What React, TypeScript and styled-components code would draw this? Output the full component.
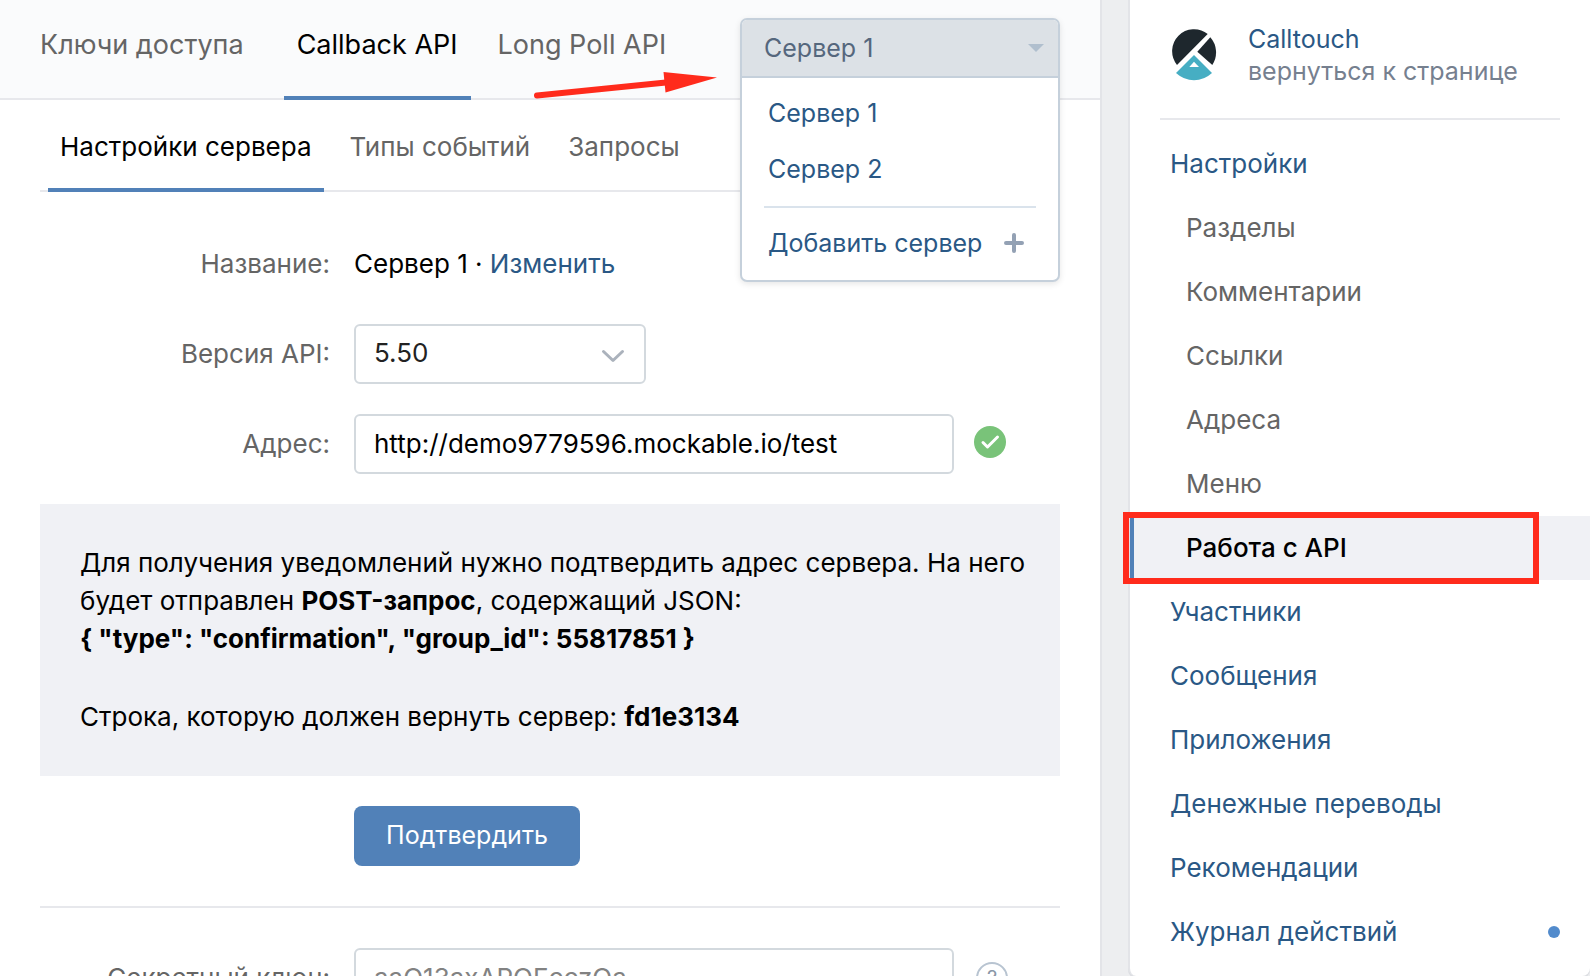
import React, { useState } from "react";
import styled, { createGlobalStyle, css } from "styled-components";

const color = {
  link: "#2a5885",
  muted: "#656565",
  accent: "#5181b8",
  line: "#e7e8ec",
  panelEdge: "#e3e4e8",
  page: "#edeef0",
  soft: "#f0f1f5",
  field: "#d3d9de",
  menuEdge: "#c5d0db",
  mark: "#ff2b1c",
};

const size = { small: "25px", base: "26px", large: "27px" };

const GlobalStyle = createGlobalStyle`
  *, *::before, *::after { box-sizing: border-box; }
  body {
    margin: 0;
    background: ${color.page};
    color: #000;
    font: ${size.base}/32px Inter, "Noto Sans", sans-serif;
  }
  button, input, select { font: inherit; color: inherit; }
  a { color: ${color.link}; text-decoration: none; }
`;

const Page = styled.div`
  display: grid;
  grid-template-columns: minmax(0, 1fr) 462px;
  column-gap: 26px;
  align-items: start;
  height: 100vh;
  overflow: hidden;
`;

const Main = styled.main`
  background: #fff;
  border-right: 2px solid ${color.panelEdge};
  min-height: 100vh;
`;

const Header = styled.header`
  position: relative;
  background: #fafbfc;
  box-shadow: inset 0 -2px ${color.line};
`;

const Tabs = styled.nav<{ $level: 1 | 2 }>`
  display: flex;
  gap: 14px;
  ${(p) =>
    p.$level === 1
      ? css`
          height: 100px;
          padding: 0 27px;
          font-size: ${size.large};
          & > :first-child {
            margin-right: 13px;
          }
        `
      : css`
          height: 92px;
          margin: 0 40px;
          padding: 0 8px;
          box-shadow: inset 0 -2px ${color.line};
        `}
`;

const Tab = styled.a<{ $active?: boolean; $level: 1 | 2 }>`
  display: flex;
  align-items: center;
  padding: ${(p) => (p.$level === 1 ? "0 13px 6px" : "6px 12px 0")};
  white-space: nowrap;
  color: ${(p) => (p.$active ? "#000" : color.muted)};
  border-bottom: 4px solid ${(p) => (p.$active ? color.accent : "transparent")};
`;

const Dropdown = styled.div`
  position: absolute;
  z-index: 2;
  top: 18px;
  right: 40px;
  width: 320px;
  font-size: ${size.small};
  background: #fff;
  border: 2px solid ${color.menuEdge};
  border-radius: 7px;
  box-shadow: 0 2px 6px rgba(0, 0, 0, 0.1);
  overflow: hidden;
`;

const DropdownToggle = styled.button`
  display: flex;
  align-items: center;
  justify-content: space-between;
  width: 100%;
  height: 58px;
  padding: 0 14px 0 22px;
  border: 0;
  border-bottom: 2px solid ${color.menuEdge};
  background: #dce1e6;
  color: #55677d;
`;

const DropdownList = styled.div`
  padding: 8px 22px;
`;

const DropdownItem = styled.button`
  display: flex;
  align-items: center;
  justify-content: space-between;
  width: 100%;
  height: 56px;
  padding: 0 12px 2px 4px;
  border: 0;
  background: none;
  color: ${color.link};
  white-space: nowrap;
`;

const DropdownRule = styled.hr`
  height: 2px;
  margin: 8px 0;
  border: 0;
  background: #dae3ec;
`;

const Arrow = styled.svg`
  position: absolute;
  z-index: 3;
  top: 70px;
  left: 532px;
  pointer-events: none;
`;

const Form = styled.form`
  display: flex;
  flex-direction: column;
  gap: 30px;
  padding: 42px 40px 40px;
`;

const Row = styled.div`
  display: grid;
  grid-template-columns: 290px minmax(0, 1fr);
  column-gap: 24px;
  align-items: center;
  height: 60px;
`;

const labelText = css`
  grid-column: 1;
  padding-bottom: 1px;
  text-align: right;
  color: ${color.muted};
`;
const Label = styled.label`
  ${labelText}
`;
const Caption = styled.span`
  ${labelText}
`;

const Value = styled.div`
  grid-column: 2;
  display: flex;
  align-items: center;
  gap: 20px;
`;

const NameValue = styled.div`
  padding-bottom: 1px;
`;

const fieldBox = css`
  height: 60px;
  padding: 0 18px 2px;
  border: 2px solid ${color.field};
  border-radius: 6px;
  background: #fff;
  outline: none;
`;

const TextField = styled.input`
  ${fieldBox}
  flex: 0 1 600px;
  min-width: 0;
  &::placeholder {
    color: #828282;
    opacity: 1;
  }
`;

const SelectWrap = styled.div`
  display: grid;
  width: 292px;
  align-items: center;
  & > * {
    grid-area: 1 / 1;
  }
  & > svg {
    justify-self: end;
    margin-right: 21px;
    pointer-events: none;
  }
`;

const Select = styled.select`
  ${fieldBox}
  width: 100%;
  appearance: none;
  color: #222;
`;

const Notice = styled.section`
  padding: 40px 30px 40px 40px;
  background: ${color.soft};
  line-height: 38px;
  p {
    margin: 0;
  }
  p + p {
    margin-top: 40px;
  }
`;

const Submit = styled.button`
  width: 226px;
  height: 60px;
  padding: 0 0 2px;
  border: 0;
  border-radius: 8px;
  background: ${color.accent};
  color: #fff;
  font-size: ${size.small};
`;

const Rule = styled.hr`
  width: 100%;
  height: 2px;
  margin: 10px 0;
  border: 0;
  background: ${color.line};
`;

const Help = styled.button`
  width: 32px;
  height: 32px;
  padding: 0;
  margin-left: 2px;
  border: 2px solid #b8c4d1;
  border-radius: 50%;
  background: none;
  color: #8a97a8;
  font-size: 20px;
  line-height: 28px;
`;

const Sidebar = styled.aside`
  background: #fff;
  border: solid ${color.panelEdge};
  border-width: 0 0 0 2px;
  border-radius: 0 0 8px 8px;
  box-shadow: 0 2px 0 #dcdee2;
`;

const Profile = styled.div`
  display: flex;
  align-items: center;
  gap: 31px;
  height: 120px;
  margin: 0 30px;
  padding: 0 0 8px 11px;
  border-bottom: 2px solid ${color.line};
`;

const ProfileText = styled.a`
  display: flex;
  flex-direction: column;
  font-size: ${size.small};
  white-space: nowrap;
  span {
    color: #76808f;
  }
`;

const Menu = styled.nav`
  padding: 12px 0;
`;

const MenuItem = styled.a<{ $sub?: boolean; $active?: boolean }>`
  position: relative;
  display: flex;
  align-items: center;
  justify-content: space-between;
  height: 64px;
  padding: 0 30px 0 ${(p) => (p.$sub ? 56 : 40)}px;
  color: ${(p) => (p.$sub ? color.muted : color.link)};
  ${(p) =>
    p.$active &&
    css`
      background: ${color.soft};
      box-shadow: inset 4px 0 ${color.accent};
      color: #000;
      font-weight: 500;
    `}
`;

const Highlight = styled.span`
  position: absolute;
  inset: -4px 51px -4px -7px;
  border: 6px solid ${color.mark};
  pointer-events: none;
`;

const Dot = styled.span`
  width: 12px;
  height: 12px;
  border-radius: 50%;
  background: #528bcc;
`;

type Entry = { title: string; sub?: boolean; active?: boolean; dot?: boolean };

const entries: Entry[] = [
  { title: "Настройки" },
  { title: "Разделы", sub: true },
  { title: "Комментарии", sub: true },
  { title: "Ссылки", sub: true },
  { title: "Адреса", sub: true },
  { title: "Меню", sub: true },
  { title: "Работа с API", sub: true, active: true },
  { title: "Участники" },
  { title: "Сообщения" },
  { title: "Приложения" },
  { title: "Денежные переводы" },
  { title: "Рекомендации" },
  { title: "Журнал действий", dot: true },
];

const Logo = () => (
  <svg width="46" height="54" viewBox="0 0 46 54" aria-hidden="true">
    <path d="M36.7 6A21.95 21.95 0 0 0 6 37Z" fill="#1e272d" />
    <path d="M39.3 9.3A22.4 22.6 0 0 1 41.3 37L26.3 23.7Z" fill="#1e272d" />
    <path d="M23 27L41 45Q33 52.3 23 52.3T5 45Z" fill="#46aec3" />
    <path d="M23 33.7L28 39H18.3Z" fill="#fff" />
  </svg>
);

export default function App() {
  const [address, setAddress] = useState("http://demo9779596.mockable.io/test");
  const [server, setServer] = useState("Сервер 1");

  return (
    <>
      <GlobalStyle />
      <Page>
        <Main>
          <Header>
            <Tabs $level={1}>
              <Tab href="#keys" $level={1}>Ключи доступа</Tab>
              <Tab href="#callback" $level={1} $active>Callback API</Tab>
              <Tab href="#longpoll" $level={1}>Long Poll API</Tab>
            </Tabs>
            <Arrow width="186" height="30" viewBox="0 0 186 30" aria-hidden="true">
              <path d="M5 25.500L134 12.500" stroke={color.mark} strokeWidth="6" strokeLinecap="round" />
              <path d="M131.500 2L185 7.500L133.500 22.500Z" fill={color.mark} />
            </Arrow>
            <Dropdown>
              <DropdownToggle type="button" aria-expanded="true">
                {server}
                <svg width="16" height="8" viewBox="0 0 16 8" aria-hidden="true">
                  <path d="M0 0H16L8 8Z" fill="#b0bfce" />
                </svg>
              </DropdownToggle>
              <DropdownList>
                {["Сервер 1", "Сервер 2"].map((name) => (
                  <DropdownItem key={name} type="button" onClick={() => setServer(name)}>
                    {name}
                  </DropdownItem>
                ))}
                <DropdownRule />
                <DropdownItem type="button">
                  Добавить сервер
                  <svg width="20" height="20" viewBox="0 0 20 20" aria-hidden="true">
                    <path d="M10 2V18M2 10H18" stroke="#93a1b4" strokeWidth="4" strokeLinecap="round" />
                  </svg>
                </DropdownItem>
              </DropdownList>
            </Dropdown>
          </Header>

          <Tabs $level={2}>
            <Tab href="#server" $level={2} $active>Настройки сервера</Tab>
            <Tab href="#events" $level={2}>Типы событий</Tab>
            <Tab href="#requests" $level={2}>Запросы</Tab>
          </Tabs>

          <Form onSubmit={(e) => e.preventDefault()}>
            <Row>
              <Caption>Название:</Caption>
              <NameValue>
                {server} · <a href="#rename">Изменить</a>
              </NameValue>
            </Row>
            <Row>
              <Label htmlFor="version">Версия API:</Label>
              <SelectWrap>
                <Select id="version" defaultValue="5.50">
                  <option>5.50</option>
                </Select>
                <svg width="24" height="18" viewBox="0 0 24 18" fill="none" aria-hidden="true">
                  <path d="M2.500 6.500L12 15.500L21.500 6.500" stroke="#abb2bc" strokeWidth="3" strokeLinecap="round" strokeLinejoin="round" />
                </svg>
              </SelectWrap>
            </Row>
            <Row>
              <Label htmlFor="address">Адрес:</Label>
              <Value>
                <TextField id="address" value={address} onChange={(e) => setAddress(e.target.value)} />
                <svg width="32" height="36" viewBox="0 0 32 36" fill="none" aria-hidden="true">
                  <circle cx="16" cy="16" r="16" fill="#79c379" />
                  <path d="M9 16.500L13.500 21L23.500 11" stroke="#fff" strokeWidth="3" strokeLinecap="round" strokeLinejoin="round" />
                </svg>
              </Value>
            </Row>
            <Notice>
              <p>
                Для получения уведомлений нужно подтвердить адрес сервера. На него будет отправлен{" "}
                <b>POST-запрос</b>, содержащий JSON:
                <br />
                <b>{'{ "type": "confirmation", "group_id": 55817851 }'}</b>
              </p>
              <p>
                Строка, которую должен вернуть сервер: <b>fd1e3134</b>
              </p>
            </Notice>
            <Row>
              <Value>
                <Submit type="submit">Подтвердить</Submit>
              </Value>
            </Row>
            <Rule />
            <Row>
              <Label htmlFor="secret">Секретный ключ:</Label>
              <Value>
                <TextField id="secret" placeholder="aaQ13axAPQEcczQa" />
                <Help type="button">?</Help>
              </Value>
            </Row>
          </Form>
        </Main>

        <Sidebar>
          <Profile>
            <Logo />
            <ProfileText href="#community">
              Calltouch
              <span>вернуться к странице</span>
            </ProfileText>
          </Profile>
          <Menu>
            {entries.map((e) => (
              <MenuItem key={e.title} href="#menu" $sub={e.sub} $active={e.active}>
                {e.title}
                {e.dot && <Dot />}
                {e.active && <Highlight />}
              </MenuItem>
            ))}
          </Menu>
        </Sidebar>
      </Page>
    </>
  );
}
